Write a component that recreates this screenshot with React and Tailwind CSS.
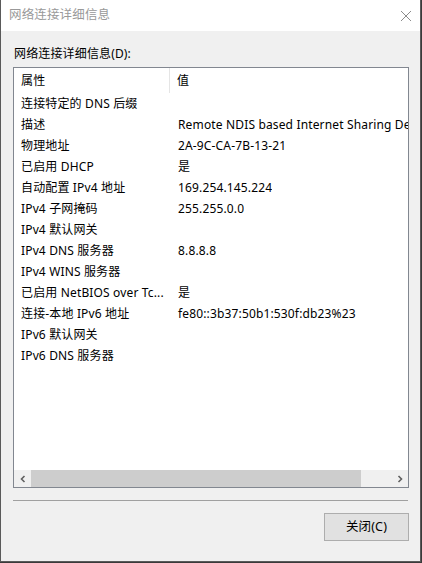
import React from "react";

const rows = [
  ["连接特定的 DNS 后缀", ""],
  ["描述", "Remote NDIS based Internet Sharing Device"],
  ["物理地址", "2A-9C-CA-7B-13-21"],
  ["已启用 DHCP", "是"],
  ["自动配置 IPv4 地址", "169.254.145.224"],
  ["IPv4 子网掩码", "255.255.0.0"],
  ["IPv4 默认网关", ""],
  ["IPv4 DNS 服务器", "8.8.8.8"],
  ["IPv4 WINS 服务器", ""],
  ["已启用 NetBIOS over Tc...", "是"],
  ["连接-本地 IPv6 地址", "fe80::3b37:50b1:530f:db23%23"],
  ["IPv6 默认网关", ""],
  ["IPv6 DNS 服务器", ""],
];

const font = { fontFamily: '"Noto Sans", "Noto Sans CJK SC", sans-serif' };

export default function App() {
  return (
    <div className="w-[422px] h-[563px] bg-[#3a3a3a] overflow-hidden" style={font}>
      <div className="w-[421px] h-[562px] flex flex-col bg-[#f0f0f0] border-l border-r border-b border-[#5a5a5a] text-[12px] tracking-[0.15px] text-black">
        {/* Title bar */}
        <div className="h-[31px] shrink-0 bg-white flex items-center justify-between pl-[8px] pr-[8px]">
          <span className="text-[#999999] text-[12.5px]">网络连接详细信息</span>
          <svg width="12" height="12" viewBox="0 0 12 12">
            <path d="M1 1 L11 11 M11 1 L1 11" stroke="#8c8c8c" strokeWidth="1" />
          </svg>
        </div>

        {/* Body */}
        <div className="flex-1 flex flex-col pl-[12px] pr-[12px]">
          <div className="h-[36px] flex items-end pb-[4px] pl-[1px]">网络连接详细信息(D):</div>

          <div className="w-[396px] h-[421px] border border-[#828790] bg-white flex flex-col">
            <div className="flex-1 overflow-hidden">
              {/* Header */}
              <div className="h-[25px] flex">
                <div className="w-[156px] pl-[7px] flex items-center border-r border-[#e5e5e5]">属性</div>
                <div className="pl-[7px] flex items-center">值</div>
              </div>
              {rows.map(([k, v]) => (
                <div key={k} className="h-[21px] flex items-center whitespace-nowrap">
                  <div className="w-[157px] pl-[7px] shrink-0">{k}</div>
                  <div className="pl-[7px] min-w-0 overflow-hidden">{v}</div>
                </div>
              ))}
            </div>

            {/* Horizontal scrollbar */}
            <div className="h-[17px] shrink-0 flex bg-[#f0f0f0]">
              <div className="w-[17px] flex items-center justify-center">
                <svg width="8" height="8" viewBox="0 0 8 8">
                  <path d="M5.5 1 L2.5 4 L5.5 7" stroke="#606060" strokeWidth="1.6" fill="none" />
                </svg>
              </div>
              <div className="flex-1 flex">
                <div className="w-[330px] bg-[#cdcdcd]" />
              </div>
              <div className="w-[17px] flex items-center justify-center">
                <svg width="8" height="8" viewBox="0 0 8 8">
                  <path d="M2.5 1 L5.5 4 L2.5 7" stroke="#606060" strokeWidth="1.6" fill="none" />
                </svg>
              </div>
            </div>
          </div>

          {/* Separator */}
          <div className="mt-[12px] w-[395px] h-px bg-[#a0a0a0]" />

          <div className="flex justify-end mt-[12px]">
            <button className="w-[85px] h-[28px] mr-[-1px] bg-[#e1e1e1] border border-[#adadad] flex items-center justify-center text-[12.5px]">
              关闭(C)
            </button>
          </div>
        </div>
      </div>
    </div>
  );
}
